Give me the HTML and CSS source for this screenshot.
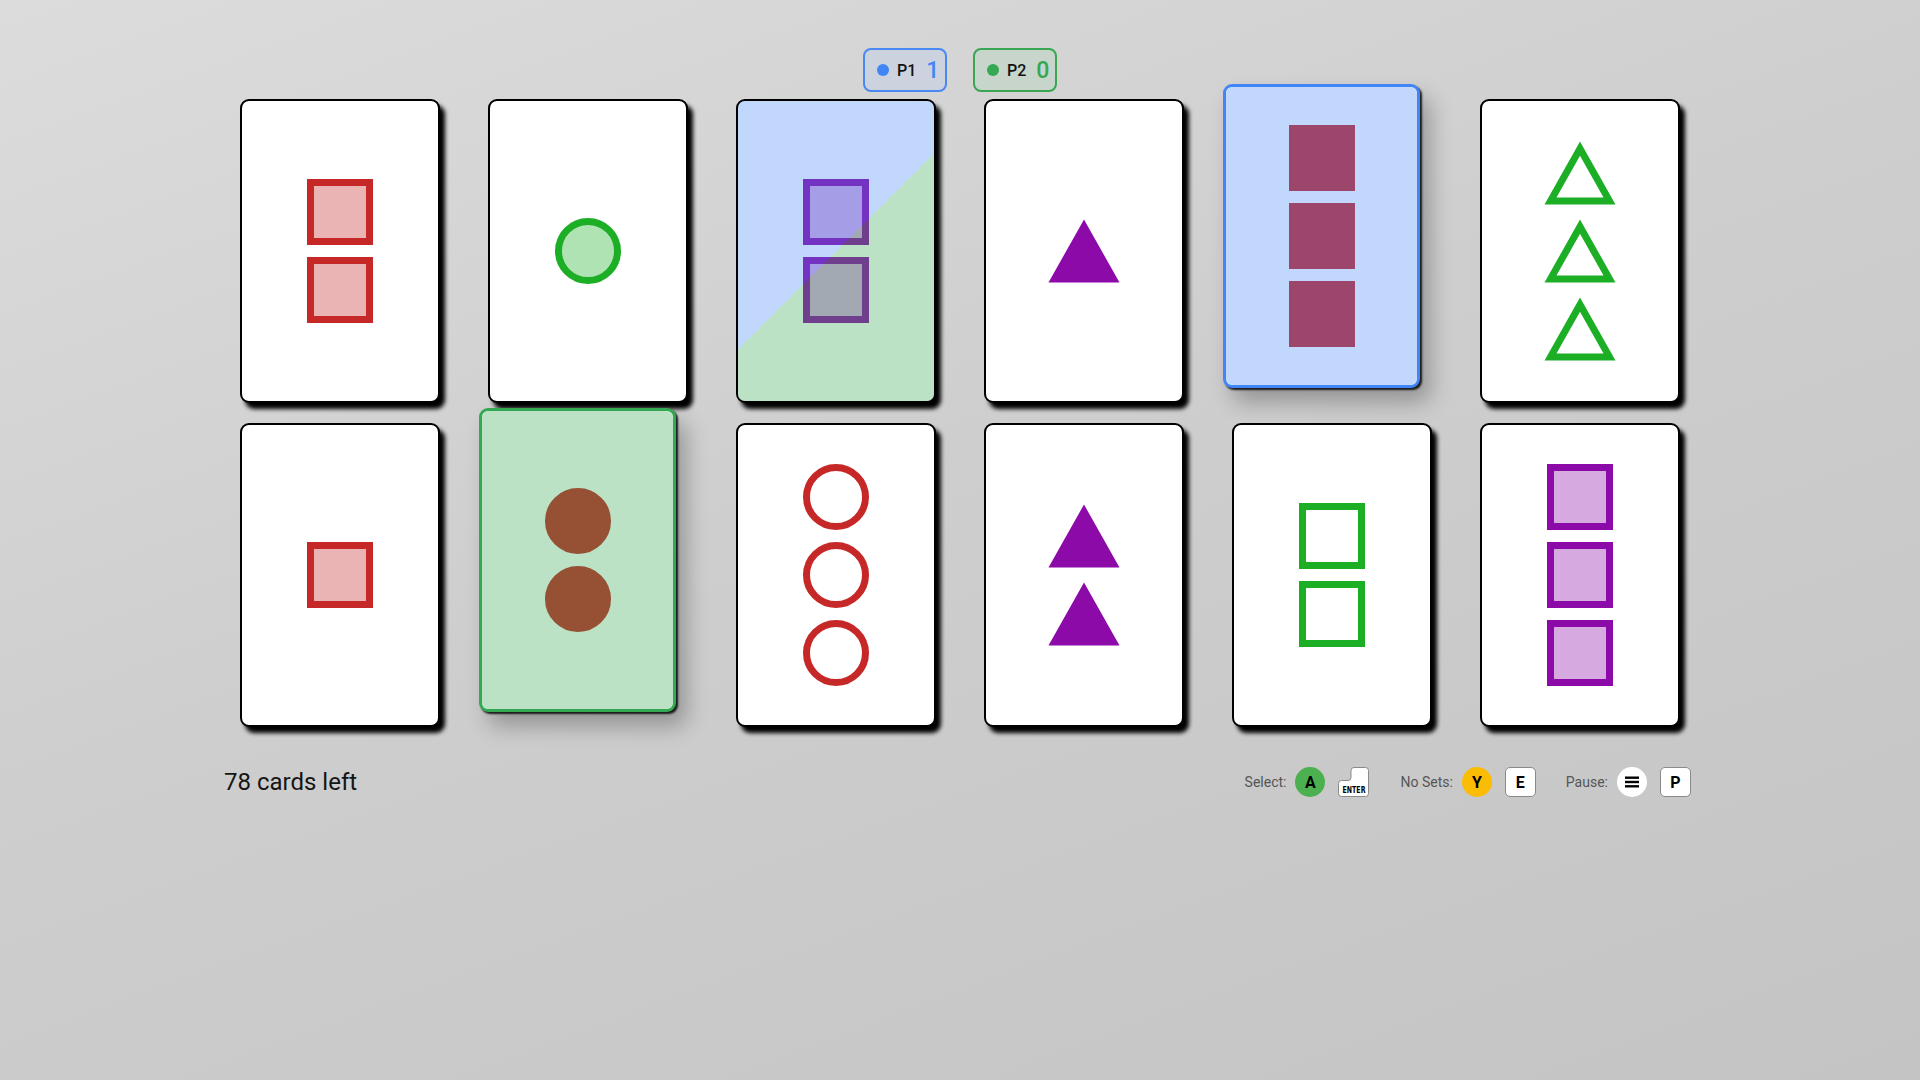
FILE: index.html
```html
<html>
    <head>
        <title>Set</title>
        <link rel="stylesheet" href="styles.css">
    </head>
    <body>
        <svg class="defs" width="0" height="0">
            <symbol id="sq" viewBox="0 0 72 66">
                <rect x="6.5" y="3.5" width="59" height="59" stroke-width="7"/>
            </symbol>
            <symbol id="ci" viewBox="0 0 72 66">
                <circle cx="36" cy="33" r="29.5" stroke-width="7"/>
            </symbol>
            <symbol id="tri" viewBox="0 0 72 66">
                <polygon points="36,11.7 9.05,59.5 62.95,59.5" stroke="none"/>
                <path fill="currentColor" fill-opacity="1" fill-rule="evenodd" stroke="none" d="M36 1.5 L0.5 64.5 L71.5 64.5 Z M36 15.75 L12.47 57.5 L59.53 57.5 Z"/>
            </symbol>
        </svg>

        <div class="players">
            <div class="player p1"><span class="dot"></span><span class="name">P1</span><span class="score">1</span></div>
            <div class="player p2"><span class="dot"></span><span class="name">P2</span><span class="score">0</span></div>
        </div>

        <div class="board">
            <!-- row 1 -->
            <div class="card red light">
                <svg class="shape"><use href="#sq"/></svg>
                <svg class="shape"><use href="#sq"/></svg>
            </div>
            <div class="card green light">
                <svg class="shape"><use href="#ci"/></svg>
            </div>
            <div class="card purple light hover-both">
                <svg class="shape"><use href="#sq"/></svg>
                <svg class="shape"><use href="#sq"/></svg>
            </div>
            <div class="card purple solid">
                <svg class="shape"><use href="#tri"/></svg>
            </div>
            <div class="card red solid picked-p1">
                <svg class="shape"><use href="#sq"/></svg>
                <svg class="shape"><use href="#sq"/></svg>
                <svg class="shape"><use href="#sq"/></svg>
            </div>
            <div class="card green empty">
                <svg class="shape"><use href="#tri"/></svg>
                <svg class="shape"><use href="#tri"/></svg>
                <svg class="shape"><use href="#tri"/></svg>
            </div>

            <!-- row 2 -->
            <div class="card red light">
                <svg class="shape"><use href="#sq"/></svg>
            </div>
            <div class="card red solid picked-p2">
                <svg class="shape"><use href="#ci"/></svg>
                <svg class="shape"><use href="#ci"/></svg>
            </div>
            <div class="card red empty">
                <svg class="shape"><use href="#ci"/></svg>
                <svg class="shape"><use href="#ci"/></svg>
                <svg class="shape"><use href="#ci"/></svg>
            </div>
            <div class="card purple solid">
                <svg class="shape"><use href="#tri"/></svg>
                <svg class="shape"><use href="#tri"/></svg>
            </div>
            <div class="card green empty">
                <svg class="shape"><use href="#sq"/></svg>
                <svg class="shape"><use href="#sq"/></svg>
            </div>
            <div class="card purple light">
                <svg class="shape"><use href="#sq"/></svg>
                <svg class="shape"><use href="#sq"/></svg>
                <svg class="shape"><use href="#sq"/></svg>
            </div>
        </div>

        <div class="footer">
            <div class="left">78 cards left</div>
            <div class="controls">
                <div class="ctrl">
                    <span class="label">Select:</span>
                    <span class="btn btn-a">A</span>
                    <svg class="enter" width="32" height="31" viewBox="0 0 32 31">
                        <path d="M16 0.5 H27.5 Q30.5 0.5 30.5 3.5 V26.5 Q30.5 29.5 27.5 29.5 H3.5 Q0.5 29.5 0.5 26.5 V16.5 Q0.5 13.5 3.5 13.5 H10 Q13 13.5 13 10.5 V3.5 Q13 0.5 16 0.5 Z" fill="#fff" stroke="#8a8a8a" stroke-width="1"/>
                        <text x="16" y="25.5" text-anchor="middle" textLength="23" lengthAdjust="spacingAndGlyphs">ENTER</text>
                    </svg>
                </div>
                <div class="ctrl">
                    <span class="label">No Sets:</span>
                    <span class="btn btn-y">Y</span>
                    <span class="key">E</span>
                </div>
                <div class="ctrl">
                    <span class="label">Pause:</span>
                    <span class="btn btn-menu">
                        <svg width="14" height="12" viewBox="0 0 14 12">
                            <rect x="0" y="0.5" width="14" height="2.4" fill="#000"/>
                            <rect x="0" y="4.8" width="14" height="2.4" fill="#000"/>
                            <rect x="0" y="9.1" width="14" height="2.4" fill="#000"/>
                        </svg>
                    </span>
                    <span class="key">P</span>
                </div>
            </div>
        </div>
    </body>
</html>
```

FILE: styles.css
```css
* {
    box-sizing: border-box;
}

body {
    margin: 0;
    min-height: 100vh;
    background: linear-gradient(160deg, #dcdcdc 0%, #cecece 45%, #c4c4c4 100%);
    font-family: Roboto, "Liberation Sans", sans-serif;
    color: #111;
}

.defs {
    position: absolute;
}

/* players */
.players {
    display: flex;
    justify-content: center;
    gap: 26px;
    padding-top: 48px;
}

.player {
    display: flex;
    align-items: center;
    height: 44px;
    width: 84px;
    padding-left: 12px;
    border: 2px solid;
    border-radius: 8px;
}

.player .dot {
    width: 12px;
    height: 12px;
    border-radius: 50%;
    margin-right: 8px;
}

.player .name {
    font-size: 16px;
    font-weight: 500;
    color: #111;
    margin-right: 10px;
}

.player .score {
    font-size: 23px;
    font-weight: 500;
}

.p1 {
    border-color: #4a88f2;
    background: #ccd3df;
}
.p1 .dot { background: #4285f4; }
.p1 .score { color: #4285f4; }

.p2 {
    border-color: #38a653;
    background: #c8d5cb;
}
.p2 .dot { background: #34a853; }
.p2 .score { color: #34a853; }

/* board */
.board {
    display: grid;
    grid-template-columns: repeat(6, 200px);
    column-gap: 48px;
    row-gap: 20px;
    justify-content: center;
    margin-top: 7px;
}

.card {
    position: relative;
    height: 304px;
    border: 2px solid #000;
    border-radius: 9px;
    background: #fff;
    box-shadow: 5px 6px 4px #000;
    display: flex;
    flex-direction: column;
    align-items: center;
    justify-content: center;
    gap: 12px;
}

.shape {
    width: 72px;
    height: 66px;
    stroke: currentColor;
}

.red { color: #c62828; }
.green { color: #1cae24; }
.purple { color: #8c0aa8; }

.solid .shape { fill: currentColor; }
.light .shape { fill: currentColor; fill-opacity: 0.35; }
.empty .shape { fill: none; }

/* overlays */
.card::after {
    content: "";
    position: absolute;
    inset: 0;
    border-radius: 7px;
    pointer-events: none;
}

.hover-both::after {
    background: linear-gradient(135deg, rgba(66, 133, 244, 0.33) 50%, rgba(52, 168, 83, 0.33) 50%);
}

.picked-p1,
.picked-p2 {
    width: 197px;
    border-width: 3px;
    transform: translate(-9px, -15px);
    box-shadow: 2px 2px 2px rgba(0, 0, 0, 0.85), 10px 14px 22px rgba(0, 0, 0, 0.28);
}

.picked-p1 {
    border-color: #4285f4;
}
.picked-p1::after {
    background: rgba(66, 133, 244, 0.33);
}

.picked-p2 {
    border-color: #34a853;
}
.picked-p2::after {
    background: rgba(52, 168, 83, 0.33);
}

/* footer */
.footer {
    width: 1472px;
    height: 40px;
    margin: 35px auto 0;
    padding-right: 5px;
    display: flex;
    align-items: center;
    justify-content: space-between;
}

.left {
    font-size: 24px;
    color: #151515;
}

.controls {
    display: flex;
    align-items: center;
    gap: 30px;
}

.ctrl {
    display: flex;
    align-items: center;
}

.label {
    font-size: 14px;
    color: #555;
    margin-right: 9px;
}

.btn {
    width: 30px;
    height: 30px;
    border-radius: 50%;
    display: flex;
    align-items: center;
    justify-content: center;
    font-weight: 700;
    font-size: 16px;
    color: #000;
}

.btn-a { background: #4caf50; }
.btn-y { background: #fbbc05; }
.btn-menu { background: #fff; }

.key {
    width: 31px;
    height: 30px;
    margin-left: 13px;
    background: #fff;
    border: 1px solid #8a8a8a;
    border-radius: 5px;
    display: flex;
    align-items: center;
    justify-content: center;
    font-weight: 700;
    font-size: 16px;
    color: #000;
}

.enter {
    margin-left: 13px;
    display: block;
}

.enter text {
    font-family: "DejaVu Sans Condensed", "Liberation Sans Narrow", sans-serif;
    font-weight: 700;
    font-size: 8px;
    fill: #000;
}
```
